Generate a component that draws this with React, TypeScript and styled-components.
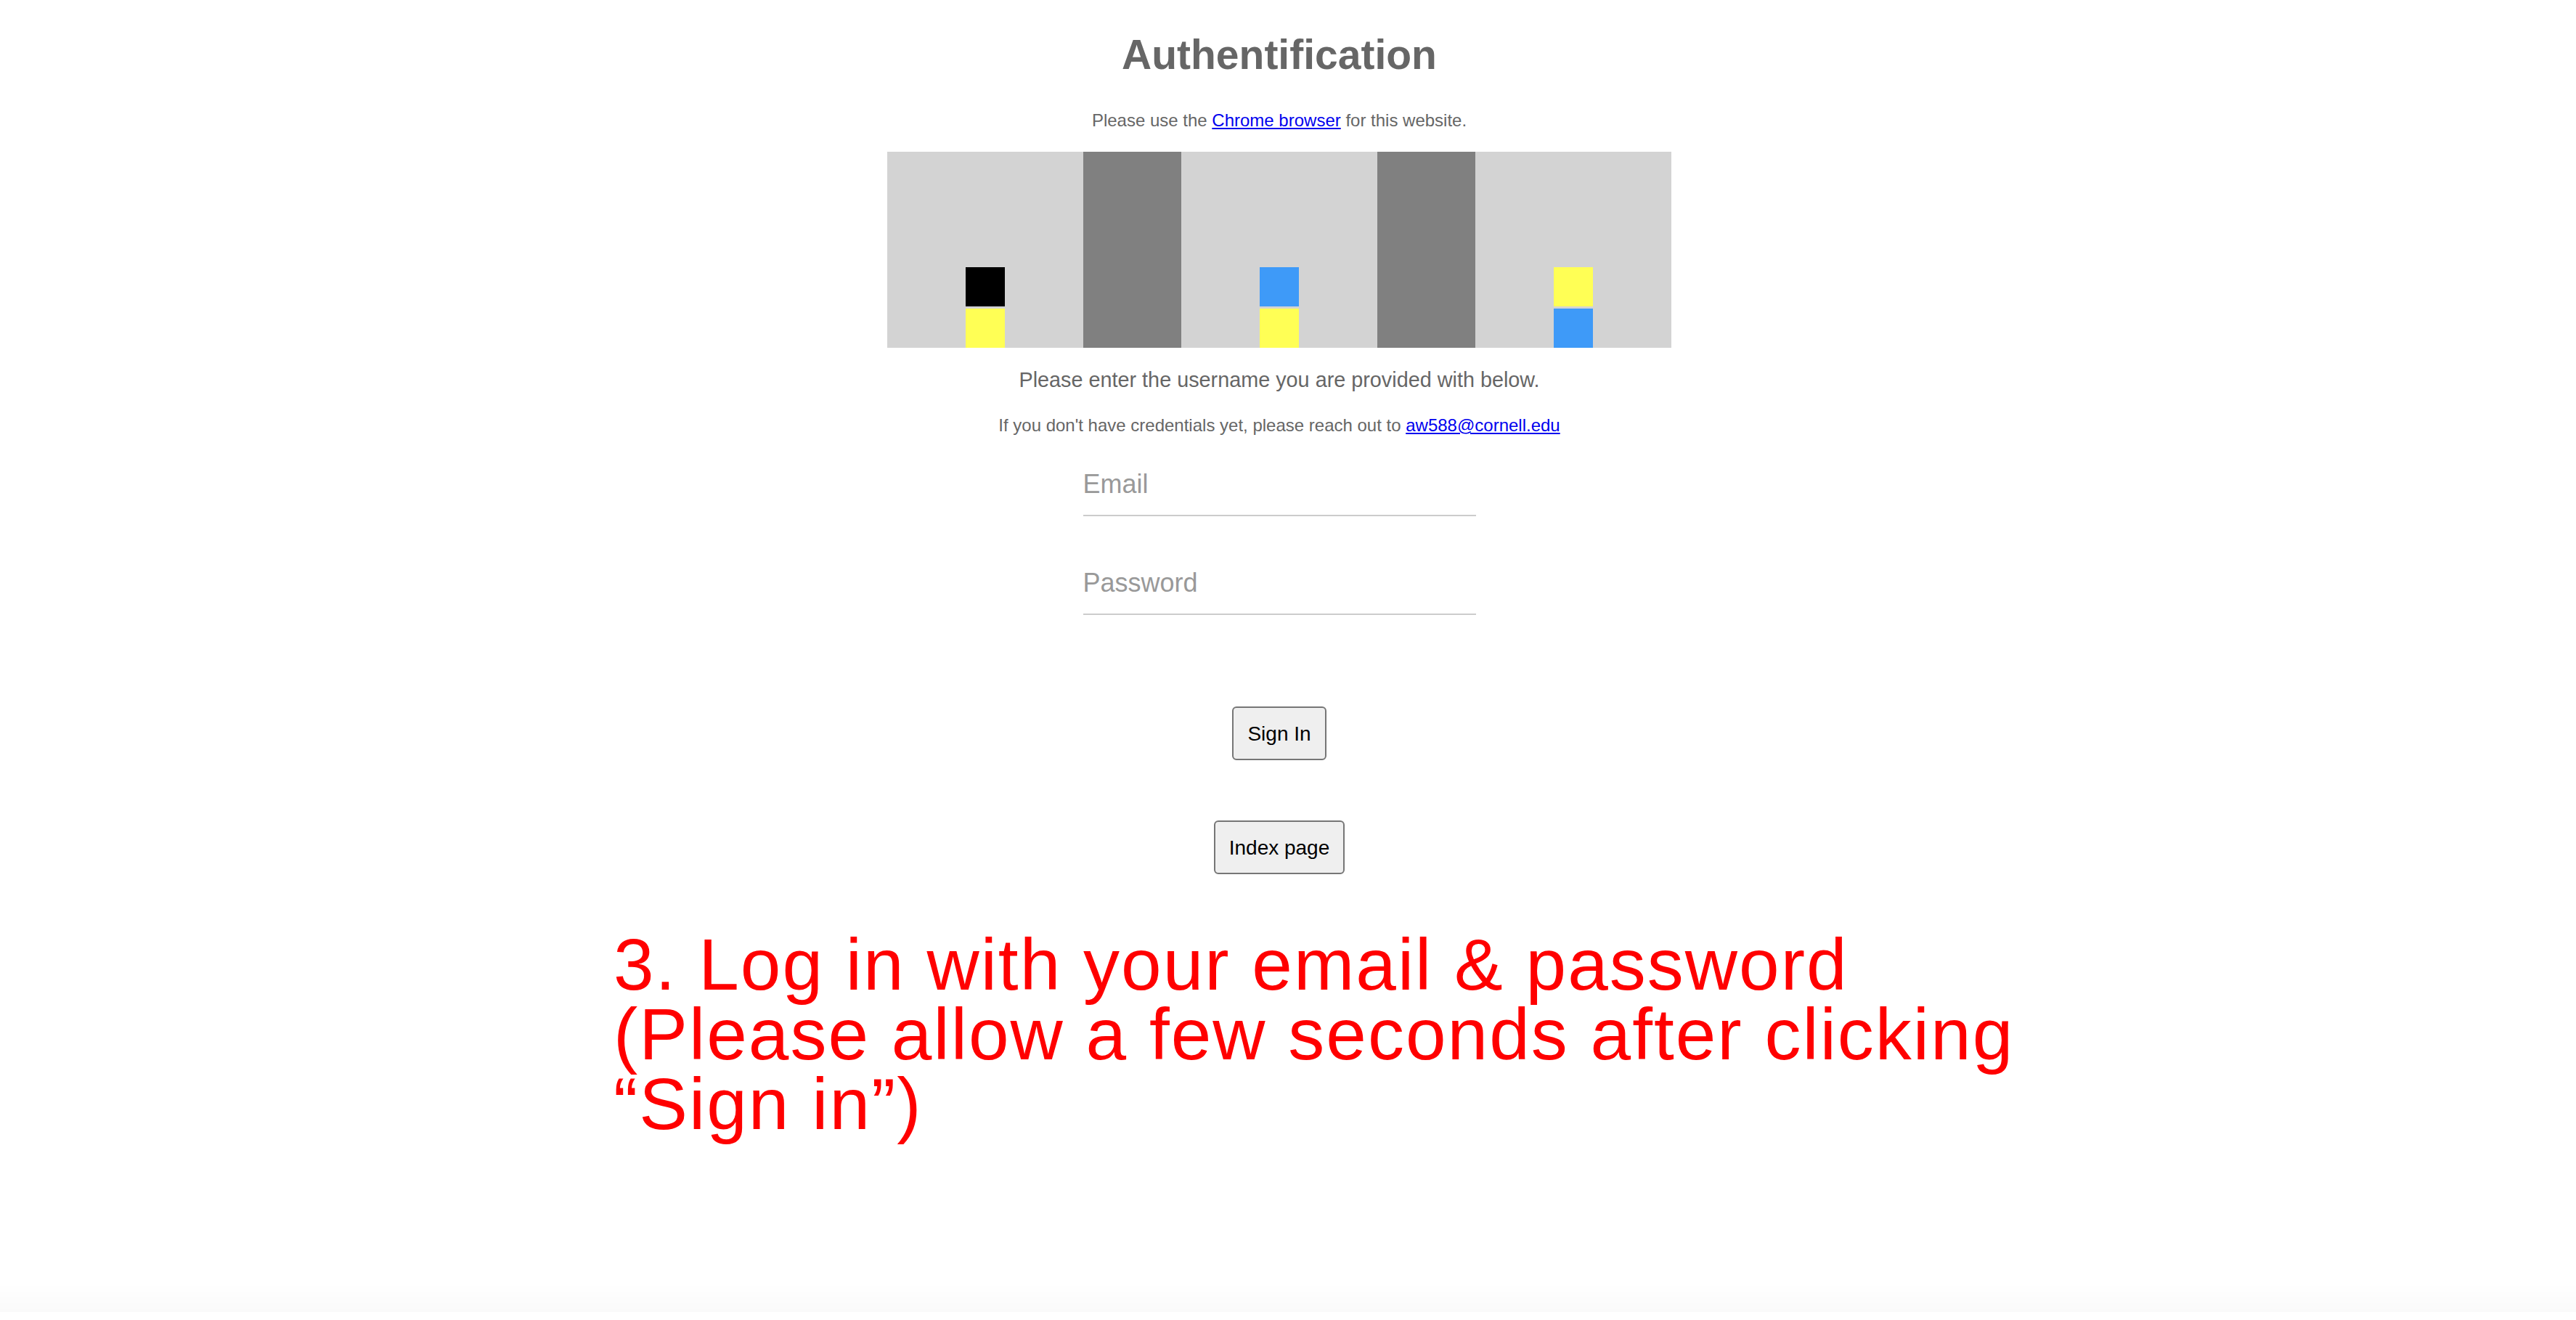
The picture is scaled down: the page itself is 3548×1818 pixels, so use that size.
import React from "react";
import styled, { createGlobalStyle } from "styled-components";

const GlobalStyle = createGlobalStyle`
  html, body {
    margin: 0;
    padding: 0;
    background: #ffffff;
  }
  body {
    font-family: "Liberation Sans", Arial, Helvetica, sans-serif;
  }
`;

const Page = styled.main`
  box-sizing: border-box;
  width: 100%;
  min-height: 100vh;
  padding: 43px 24px 0 0;
  display: flex;
  flex-direction: column;
  align-items: center;
`;

const Title = styled.h1`
  margin: 0;
  font-size: 57px;
  line-height: 64px;
  font-weight: 700;
  color: #666666;
`;

const Notice = styled.p`
  margin: 45px 0 0;
  font-size: 24px;
  line-height: 28px;
  color: #666666;
`;

const Link = styled.a`
  color: #0000ee;
  text-decoration: underline;
`;

const Board = styled.div`
  margin-top: 29px;
  display: flex;
  width: 1080px;
  height: 270px;
  background: #d3d3d3;
`;

const Lane = styled.div<{ $dark?: boolean }>`
  flex: 0 0 ${(p) => (p.$dark ? 135 : 270)}px;
  background: ${(p) => (p.$dark ? "#808080" : "transparent")};
  display: flex;
  flex-direction: column;
  justify-content: flex-end;
  align-items: center;
  gap: 3px;
`;

const Block = styled.div<{ $color: string }>`
  width: 54px;
  height: 54px;
  background: ${(p) => p.$color};
`;

const Lead = styled.p`
  margin: 27px 0 0;
  font-size: 28.8px;
  line-height: 34px;
  color: #666666;
`;

const Hint = styled.p`
  margin: 32px 0 0;
  font-size: 24px;
  line-height: 28px;
  color: #666666;
`;

const Form = styled.form`
  margin-top: 36px;
  display: flex;
  flex-direction: column;
  align-items: center;
`;

const Field = styled.input`
  box-sizing: border-box;
  width: 541px;
  height: 75px;
  padding: 10px 0 21px;
  border: none;
  border-bottom: 2px solid #cccccc;
  border-radius: 0;
  background: transparent;
  font-family: "Liberation Sans", Arial, sans-serif;
  font-size: 36px;
  color: #333333;
  outline: none;

  &::placeholder {
    color: #999999;
  }

  & + & {
    margin-top: 61px;
  }
`;

const Button = styled.button<{ $gap: number }>`
  margin-top: ${(p) => p.$gap}px;
  padding: 20px 19px 18px;
  border: 2px solid #767676;
  border-radius: 6px;
  background: #efefef;
  font-family: "Liberation Sans", Arial, sans-serif;
  font-size: 28px;
  line-height: 32px;
  color: #000000;
  cursor: pointer;
`;

const Note = styled.div`
  align-self: flex-start;
  box-sizing: border-box;
  width: 2040px;
  margin: 80px 0 0 845px;
  display: flex;
  flex-direction: column;
  color: #ff0000;
`;

const NoteLine = styled.span`
  display: block;
  height: 96px;
  font-size: 100px;
  line-height: 88px;
  letter-spacing: 2px;
  white-space: nowrap;
`;

const Shade = styled.div`
  position: fixed;
  left: 0;
  right: 0;
  bottom: 11px;
  height: 40px;
  background: linear-gradient(to bottom, rgba(0, 0, 0, 0), rgba(0, 0, 0, 0.02));
  pointer-events: none;
`;

type LaneData = { dark?: boolean; blocks: string[] };

const lanes: LaneData[] = [
  { blocks: ["#000000", "#ffff55"] },
  { dark: true, blocks: [] },
  { blocks: ["#3e9af8", "#ffff55"] },
  { dark: true, blocks: [] },
  { blocks: ["#ffff55", "#3e9af8"] },
];

export default function App() {
  return (
    <>
      <GlobalStyle />
      <Page>
        <Title>Authentification</Title>
        <Notice>
          Please use the <Link href="#">Chrome browser</Link> for this website.
        </Notice>
        <Board>
          {lanes.map((lane, i) => (
            <Lane key={i} $dark={lane.dark}>
              {lane.blocks.map((c, j) => (
                <Block key={j} $color={c} />
              ))}
            </Lane>
          ))}
        </Board>
        <Lead>Please enter the username you are provided with below.</Lead>
        <Hint>
          If you don't have credentials yet, please reach out to{" "}
          <Link href="#">aw588@cornell.edu</Link>
        </Hint>
        <Form onSubmit={(e) => e.preventDefault()}>
          <Field type="email" placeholder="Email" />
          <Field type="password" placeholder="Password" />
          <Button type="submit" $gap={126}>
            Sign In
          </Button>
        </Form>
        <Button type="button" $gap={83}>
          Index page
        </Button>
        <Note>
          <NoteLine>3. Log in with your email &amp; password</NoteLine>
          <NoteLine>(Please allow a few seconds after clicking</NoteLine>
          <NoteLine>“Sign in”)</NoteLine>
        </Note>
      </Page>
      <Shade />
    </>
  );
}
